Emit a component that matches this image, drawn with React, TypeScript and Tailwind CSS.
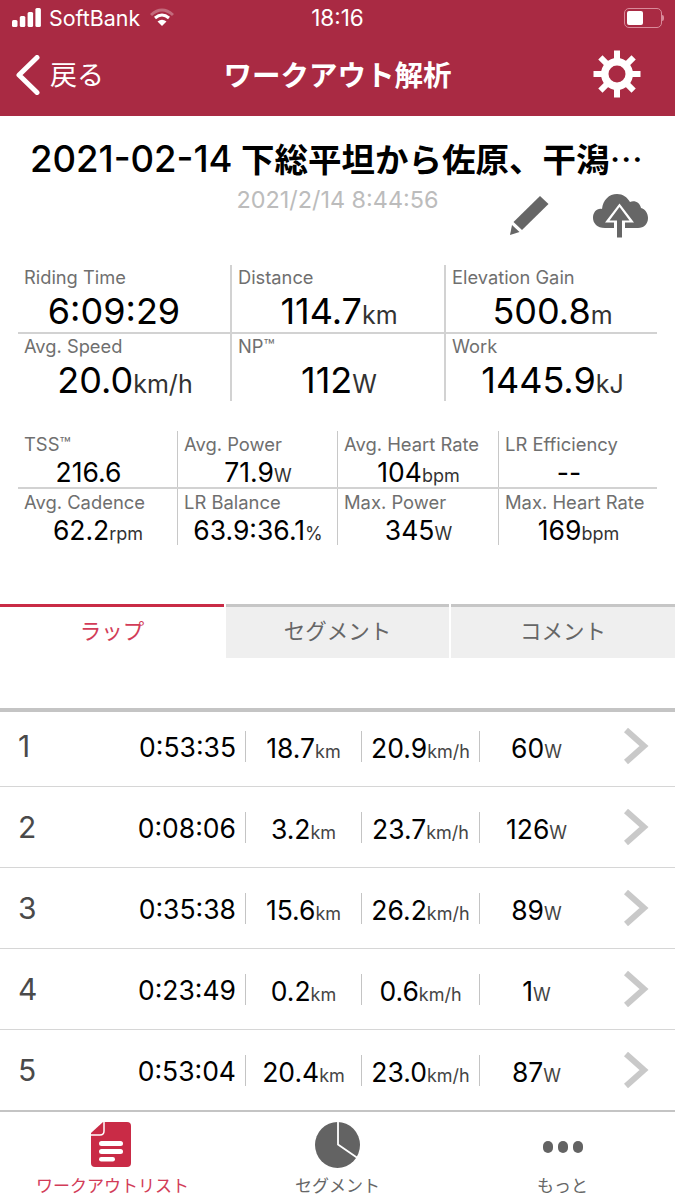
const font = "font-['Inter','Noto_Sans_CJK_JP',sans-serif]";

const bigStats = [
  [
    { label: 'Riding Time', value: '6:09:29', unit: '' },
    { label: 'Distance', value: '114.7', unit: 'km' },
    { label: 'Elevation Gain', value: '500.8', unit: 'm' },
  ],
  [
    { label: 'Avg. Speed', value: '20.0', unit: 'km/h' },
    { label: 'NP™', value: '112', unit: 'W' },
    { label: 'Work', value: '1445.9', unit: 'kJ' },
  ],
];

const smallStats = [
  [
    { label: 'TSS™', value: '216.6', unit: '' },
    { label: 'Avg. Power', value: '71.9', unit: 'W' },
    { label: 'Avg. Heart Rate', value: '104', unit: 'bpm' },
    { label: 'LR Efficiency', value: '--', unit: '' },
  ],
  [
    { label: 'Avg. Cadence', value: '62.2', unit: 'rpm' },
    { label: 'LR Balance', value: '63.9:36.1', unit: '%' },
    { label: 'Max. Power', value: '345', unit: 'W' },
    { label: 'Max. Heart Rate', value: '169', unit: 'bpm' },
  ],
];

const laps = [
  { no: 1, time: '0:53:35', dist: '18.7', speed: '20.9', power: '60' },
  { no: 2, time: '0:08:06', dist: '3.2', speed: '23.7', power: '126' },
  { no: 3, time: '0:35:38', dist: '15.6', speed: '26.2', power: '89' },
  { no: 4, time: '0:23:49', dist: '0.2', speed: '0.6', power: '1' },
  { no: 5, time: '0:53:04', dist: '20.4', speed: '23.0', power: '87' },
];

function StatusBar() {
  return (
    <div className="h-[36px] flex items-center pl-[12px] pr-[9px] relative text-white">
      <svg width="29" height="20" viewBox="0 0 29 20" className="mr-[8px]">
        <rect x="0" y="12" width="5.5" height="7" rx="1.5" fill="#fff" />
        <rect x="7.8" y="8" width="5.5" height="11" rx="1.5" fill="#fff" />
        <rect x="15.6" y="4" width="5.5" height="15" rx="1.5" fill="#fff" />
        <rect x="23.4" y="0" width="5.5" height="19" rx="1.5" fill="#fff" />
      </svg>
      <span className="text-[21.4px]">SoftBank</span>
      <svg width="24" height="20" viewBox="0 0 24 20" className="ml-[10px]">
        <path d="M1 7 Q12 -3 23 7" fill="none" stroke="#fff" strokeOpacity="0.3" strokeWidth="3" />
        <path d="M5 10 Q12 4 19 10" fill="none" stroke="#fff" strokeWidth="3" />
        <path d="M12 18 L7.5 13.5 Q12 10 16.5 13.5 Z" fill="#fff" />
      </svg>
      <span className="absolute left-0 right-0 text-center text-[22.5px]">18:16</span>
      <div className="ml-auto mr-[2px] flex items-center">
        <div className="w-[38px] h-[20px] rounded-[5px] border border-[#d98a9a] p-[2px]">
          <div className="w-[16px] h-full rounded-[2px] bg-white" />
        </div>
        <div className="w-[2px] h-[6px] rounded-r-sm bg-[#d98a9a]" />
      </div>
    </div>
  );
}

function Gear() {
  return (
    <svg width="48" height="48" viewBox="0 0 48 48">
      {[0, 45, 90, 135].map((a) => (
        <rect key={a} x="21" y="0.5" width="6" height="47" fill="#fff" transform={`rotate(${a} 24 24)`} />
      ))}
      <circle cx="24" cy="24" r="12.25" fill="none" stroke="#fff" strokeWidth="7.5" />
      <circle cx="24" cy="24" r="8.5" fill="#a92a43" />
    </svg>
  );
}

function Header() {
  return (
    <div className="h-[80px] flex items-center relative text-white">
      <svg width="26" height="40" viewBox="0 0 26 40" className="ml-[15px] mt-[-2px]">
        <path d="M22 2.5 L4 20 L22 37.5" fill="none" stroke="#fff" strokeWidth="5" strokeLinecap="round" strokeLinejoin="round" />
      </svg>
      <span className="ml-[9px] text-[27px]">戻る</span>
      <span className="absolute left-0 right-0 text-center text-[28.5px] font-semibold">ワークアウト解析</span>
      <div className="ml-auto mr-[34px] mt-[-4px]">
        <Gear />
      </div>
    </div>
  );
}

function ActionIcons() {
  return (
    <div className="flex items-start justify-end h-[50px] pr-[27px] mt-[-19px] gap-[41px]">
      <svg width="42" height="42" viewBox="0 0 42 42">
        <path d="M31 2 L39.5 10 L13 36 L4.5 28 Z" fill="#666" />
        <path d="M3 31 L10.5 38 L1 41 Z" fill="#666" />
      </svg>
      <svg width="56" height="44" viewBox="0 0 56 44">
        <path
          d="M13 34 C5 34 1 29 1 24 C1 18 5 14 10 15 C11 6 17 0 25 0 C31 0 35 3 38 8 C43 6 48 9 49 14 C53 15 56 19 56 24 C56 30 52 34 46 34 Z"
          fill="#666"
        />
        <path d="M27.5 9.5 L13 28.5 L22 28.5 L22 43.5 L33 43.5 L33 28.5 L42 28.5 Z" fill="#fff" />
        <path d="M27.5 13 L17.5 26.5 L25 26.5 L25 43.5 L30 43.5 L30 26.5 L37.5 26.5 Z" fill="#666" />
      </svg>
    </div>
  );
}

function Big({ label, value, unit, first }: { label: string; value: string; unit: string; first: boolean }) {
  return (
    <div className={`h-[67px] pl-[6px] pt-[2px] ${first ? '' : 'border-l-2 border-[#d2d2d2]'}`}>
      <div className="text-[18.3px] leading-[20px] text-[#6f6f6f] whitespace-nowrap">{label}</div>
      <div className={`text-center leading-[48px] text-black text-[36px] whitespace-nowrap ${unit ? 'pr-[4px]' : 'pr-[26px]'}`}>
        {value}
        <span className="text-[25px] text-[#333]">{unit}</span>
      </div>
    </div>
  );
}

function Small({ label, value, unit, first }: { label: string; value: string; unit: string; first: boolean }) {
  return (
    <div className={`h-[56px] pl-[6px] pt-[3px] ${first ? '' : 'border-l border-[#c8c8c8]'}`}>
      <div className="text-[18.4px] leading-[21px] text-[#6f6f6f] whitespace-nowrap">{label}</div>
      <div className={`text-center leading-[34px] text-black text-[26.5px] whitespace-nowrap ${unit ? 'pr-[5px]' : 'pr-[24px]'}`}>
        {value}
        <span className="text-[18px] text-[#333]">{unit}</span>
      </div>
    </div>
  );
}

function Tabs() {
  return (
    <div className="flex gap-[2px] h-[54px] mt-[59px]">
      <div className="w-[224px] border-t-[3px] border-[#c92b46] text-center text-[21.5px] leading-[48px] text-[#d23c58]">ラップ</div>
      <div className="w-[223px] border-t-[3px] border-[#c6c6c6] bg-[#efefef] text-center text-[21.5px] leading-[48px] text-[#666]">セグメント</div>
      <div className="flex-1 border-t-[3px] border-[#c6c6c6] bg-[#efefef] text-center text-[21.5px] leading-[48px] text-[#666]">コメント</div>
    </div>
  );
}

function LapRow({ lap, first }: { lap: (typeof laps)[number]; first: boolean }) {
  return (
    <div className={`flex items-center border-b-[1.5px] border-[#d6d6d6] text-black whitespace-nowrap ${first ? 'h-[75px] pb-[6px]' : 'h-[81px]'}`}>
      <span className="w-[120px] pl-[18px] text-[30px] text-[#4a4a4a]">{lap.no}</span>
      <span className="w-[116px] pt-[3px] text-right text-[26.5px]">{lap.time}</span>
      <div className="ml-[9px] flex h-[31px]">
        <div className="w-[116px] border-l border-[#c4c4c4] text-center text-[26.5px] leading-[35px]">
          {lap.dist}
          <span className="text-[18px] text-[#444]">km</span>
        </div>
        <div className="w-[118px] border-l border-[#c4c4c4] text-center text-[26.5px] leading-[35px]">
          {lap.speed}
          <span className="text-[18px] text-[#444]">km/h</span>
        </div>
        <div className="w-[114px] border-l border-[#c4c4c4] text-center text-[26.5px] leading-[35px]">
          {lap.power}
          <span className="text-[18px] text-[#444]">W</span>
        </div>
      </div>
      <svg width="26" height="38" viewBox="0 0 26 38" className="ml-[30px]">
        <path d="M3 3 L21 19 L3 35" fill="none" stroke="#c9c9c9" strokeWidth="6" />
      </svg>
    </div>
  );
}

function TabBar() {
  return (
    <div className="h-[89px] grid grid-cols-3 border-t-2 border-[#c4c4c4] mt-[-1px] bg-white">
      <div className="flex flex-col items-center pt-[10px]">
        <svg width="42" height="46" viewBox="0 0 42 46" className="ml-[-2px]">
          <path d="M12 0 H36 Q40 0 40 4 V41 Q40 45 36 45 H4 Q0 45 0 41 V11 Z" fill="#c92b46" />
          <path d="M13 0 V9 Q13 13 9 13 H0" fill="none" stroke="#fff" strokeWidth="1.5" />
          <rect x="8" y="19" width="24" height="5" rx="2.5" fill="#fff" />
          <rect x="8" y="27" width="24" height="5" rx="2.5" fill="#fff" />
          <rect x="8" y="35" width="16" height="4.5" rx="2.2" fill="#fff" />
        </svg>
        <span className="text-[17px] leading-[22px] mt-[7px] text-[#d23c58]">ワークアウトリスト</span>
      </div>
      <div className="flex flex-col items-center pt-[10px]">
        <svg width="46" height="46" viewBox="0 0 46 46">
          <ellipse cx="22.5" cy="23" rx="22.5" ry="23" fill="#636363" />
          <path d="M23 -1 V22.5 L44 37" fill="none" stroke="#fff" strokeWidth="1.8" />
        </svg>
        <span className="text-[17px] leading-[22px] mt-[7px] text-[#666]">セグメント</span>
      </div>
      <div className="flex flex-col items-center pt-[10px]">
        <div className="h-[46px] flex items-center gap-[5px] mt-[2px]">
          <div className="w-[10px] h-[12px] rounded-full bg-[#636363]" />
          <div className="w-[10px] h-[12px] rounded-full bg-[#636363]" />
          <div className="w-[10px] h-[12px] rounded-full bg-[#636363]" />
        </div>
        <span className="text-[17px] leading-[22px] mt-[5px] text-[#666]">もっと</span>
      </div>
    </div>
  );
}

export default function App() {
  return (
    <div className={`w-[675px] h-[1200px] bg-white overflow-hidden ${font}`}>
      <div className="bg-[#a92a43]">
        <StatusBar />
        <Header />
      </div>

      <div className="h-[65px] pt-[19px] pr-[2px] text-center text-[33.5px] leading-[46px] font-semibold text-black whitespace-nowrap">
        <span className="text-[36.5px] font-medium">2021-02-14</span> 下総平坦から佐原、干潟
        <span className="font-['Noto_Sans_CJK_JP',sans-serif] font-medium">…</span>
      </div>
      <div className="mt-[6px] text-center text-[23.4px] leading-[26px] text-[#bcbcbc]">2021/2/14 8:44:56</div>
      <ActionIcons />

      {/* main stats */}
      <div className="mx-[18px] mt-[21px]">
        {bigStats.map((row, i) => (
          <div key={i} className={`grid grid-cols-[212px_214px_1fr] ${i === 0 ? 'border-b-2 border-[#d2d2d2]' : ''}`}>
            {row.map((s, j) => (
              <Big key={s.label} {...s} first={j === 0} />
            ))}
          </div>
        ))}
      </div>

      <div className="mx-[18px] mt-[30px]">
        {smallStats.map((row, i) => (
          <div key={i} className={`grid grid-cols-[159px_160px_161px_1fr] ${i === 0 ? 'border-b-2 border-[#d2d2d2]' : ''}`}>
            {row.map((s, j) => (
              <Small key={s.label} {...s} first={j === 0} />
            ))}
          </div>
        ))}
      </div>

      <Tabs />

      <div className="mt-[50px] border-t-4 border-[#c4c4c4]">
        {laps.map((lap, i) => (
          <LapRow key={lap.no} lap={lap} first={i === 0} />
        ))}
      </div>

      <TabBar />
    </div>
  );
}
